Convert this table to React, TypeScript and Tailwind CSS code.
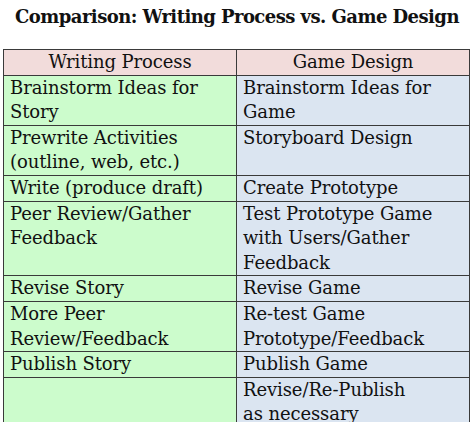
const rows: [string, string][] = [
  ["Brainstorm Ideas for Story", "Brainstorm Ideas for Game"],
  ["Prewrite Activities (outline, web, etc.)", "Storyboard Design"],
  ["Write (produce draft)", "Create Prototype"],
  ["Peer Review/Gather Feedback", "Test Prototype Game with Users/Gather Feedback"],
  ["Revise Story", "Revise Game"],
  ["More Peer Review/Feedback", "Re-test Game Prototype/Feedback"],
  ["Publish Story", "Publish Game"],
];

export default function App() {
  return (
    <div className="w-[474px] h-[422px] overflow-hidden bg-white text-[#111] font-['DejaVu_Serif',serif]">
      {/* Title */}
      <h1 className="h-[49px] pt-[5px] text-center text-[18px] font-bold leading-[24px] tracking-[-0.55px]">
        Comparison: Writing Process vs. Game Design
      </h1>

      <table className="ml-[3px] w-[467px] table-fixed border-collapse text-[18px] leading-[24.6px] tracking-[-0.1px]">
        <thead>
          <tr className="bg-[#f2dcdb]">
            <th className="border border-[#3a3a3a] font-normal text-center">Writing Process</th>
            <th className="border border-[#3a3a3a] font-normal text-center">Game Design</th>
          </tr>
        </thead>
        <tbody>
          {rows.map(([left, right]) => (
            <tr key={left} className="align-top">
              <td className="border border-[#3a3a3a] bg-[#ccfccc] pl-[6px] pr-1">{left}</td>
              <td className="border border-[#3a3a3a] bg-[#dbe5f1] pl-[6px] pr-1">{right}</td>
            </tr>
          ))}
          <tr className="align-top">
            <td className="border border-[#3a3a3a] bg-[#ccfccc]" />
            <td className="border border-[#3a3a3a] bg-[#dbe5f1] pl-[6px] pr-1">
              Revise/Re-Publish
              <br />
              <span className="underline decoration-wavy decoration-[#5a9a3a] underline-offset-2">as</span>{" "}
              necessary
            </td>
          </tr>
        </tbody>
      </table>
    </div>
  );
}
